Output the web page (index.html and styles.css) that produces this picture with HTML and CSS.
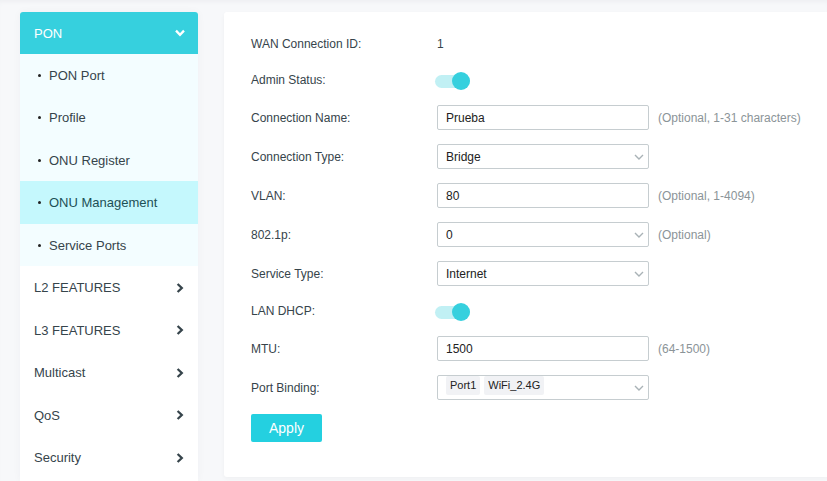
FILE: index.html
```
<!DOCTYPE html>
<html lang="en">

<head>
    <meta charset="UTF-8">
    <meta name="viewport" content="width=device-width, initial-scale=1.0">
    <title>ONU Management</title>
    <link rel="stylesheet" href="styles.css">
</head>

<body>
    <svg class="sprite" aria-hidden="true">
        <symbol id="chevron" viewBox="0 0 12 12">
            <path d="M3.6 2 7.8 6 3.6 10" />
        </symbol>
    </svg>

    <nav class="sidebar">
        <ul class="menu">
            <li>
                <a class="menu-link open" href="#pon">PON
                    <svg class="arrow"><use href="#chevron" /></svg>
                </a>
                <ul class="submenu">
                    <li><a href="#port">PON Port</a></li>
                    <li><a href="#profile">Profile</a></li>
                    <li><a href="#register">ONU Register</a></li>
                    <li><a class="active" href="#management">ONU Management</a></li>
                    <li><a href="#service">Service Ports</a></li>
                </ul>
            </li>
            <li><a class="menu-link" href="#l2">L2 FEATURES <svg class="arrow"><use href="#chevron" /></svg></a></li>
            <li><a class="menu-link" href="#l3">L3 FEATURES <svg class="arrow"><use href="#chevron" /></svg></a></li>
            <li><a class="menu-link" href="#multicast">Multicast <svg class="arrow"><use href="#chevron" /></svg></a></li>
            <li><a class="menu-link" href="#qos">QoS <svg class="arrow"><use href="#chevron" /></svg></a></li>
            <li><a class="menu-link" href="#security">Security <svg class="arrow"><use href="#chevron" /></svg></a></li>
        </ul>
    </nav>

    <main class="content">
        <form class="panel">
            <div class="row id-row">
                <span class="label">WAN Connection ID:</span>
                <span>1</span>
            </div>
            <div class="row switch-row">
                <label class="label" for="adminStatus">Admin Status:</label>
                <input class="switch" type="checkbox" id="adminStatus" checked>
            </div>
            <div class="row">
                <label class="label" for="connectionName">Connection Name:</label>
                <input class="field" type="text" id="connectionName" value="Prueba">
                <span class="hint">(Optional, 1-31 characters)</span>
            </div>
            <div class="row">
                <label class="label" for="connectionType">Connection Type:</label>
                <div class="select-box">
                    <select class="field" id="connectionType">
                        <option>Bridge</option>
                    </select>
                    <svg class="caret" viewBox="0 0 10 6"><path d="M1 1l4 4 4-4" /></svg>
                </div>
            </div>
            <div class="row">
                <label class="label" for="vlan">VLAN:</label>
                <input class="field" type="text" id="vlan" value="80">
                <span class="hint">(Optional, 1-4094)</span>
            </div>
            <div class="row">
                <label class="label" for="priority">802.1p:</label>
                <div class="select-box">
                    <select class="field" id="priority">
                        <option>0</option>
                    </select>
                    <svg class="caret" viewBox="0 0 10 6"><path d="M1 1l4 4 4-4" /></svg>
                </div>
                <span class="hint">(Optional)</span>
            </div>
            <div class="row">
                <label class="label" for="serviceType">Service Type:</label>
                <div class="select-box">
                    <select class="field" id="serviceType">
                        <option>Internet</option>
                    </select>
                    <svg class="caret" viewBox="0 0 10 6"><path d="M1 1l4 4 4-4" /></svg>
                </div>
            </div>
            <div class="row switch-row">
                <label class="label" for="lanDhcp">LAN DHCP:</label>
                <input class="switch" type="checkbox" id="lanDhcp" checked>
            </div>
            <div class="row">
                <label class="label" for="mtu">MTU:</label>
                <input class="field" type="text" id="mtu" value="1500">
                <span class="hint">(64-1500)</span>
            </div>
            <div class="row">
                <label class="label" for="portBinding">Port Binding:</label>
                <div class="select-box">
                    <button class="field tags" type="button" id="portBinding" aria-haspopup="listbox">
                        <span class="tag">Port1</span>
                        <span class="tag">WiFi_2.4G</span>
                    </button>
                    <svg class="caret" viewBox="0 0 10 6"><path d="M1 1l4 4 4-4" /></svg>
                </div>
            </div>
            <button class="apply" type="button">Apply</button>
        </form>
    </main>
</body>

</html>
```

FILE: styles.css
```
* {
    box-sizing: border-box;
}

body {
    display: flex;
    gap: 26px;
    margin: 0;
    min-height: 100vh;
    padding: 12px 0 0 20px;
    font-family: "Liberation Sans", Arial, sans-serif;
    font-size: 12px;
    color: #36444b;
    background-color: #f7f8fa;
    box-shadow: inset 0 4px 4px -2px #eeeff2;
}

.sprite {
    position: absolute;
    width: 0;
    height: 0;
}

.sidebar {
    flex: 0 0 178px;
    background-color: #fff;
    border-radius: 3px 3px 0 0;
    box-shadow: 0 0 8px rgba(40, 60, 80, 0.04);
}

.menu,
.submenu {
    margin: 0;
    padding: 0;
    list-style: none;
    font-size: 13px;
}

.menu a {
    display: flex;
    align-items: center;
    height: 42px;
    color: #36444b;
    text-decoration: none;
}

.menu li:nth-child(even) > a {
    height: 43px;
}

.menu .menu-link {
    justify-content: space-between;
    padding: 0 12px 0 14px;
}

.menu .open {
    color: #fff;
    background-color: #36d0de;
    border-radius: 3px 3px 0 0;
}

.arrow {
    width: 12px;
    height: 12px;
    fill: none;
    stroke: currentColor;
    stroke-width: 2.3;
}

.open .arrow {
    transform: rotate(90deg);
}

.submenu {
    background-color: #f3fdff;
}

.menu .submenu a {
    gap: 8px;
    padding-left: 18px;
}

.submenu a::before {
    content: "";
    width: 3px;
    height: 3px;
    border-radius: 50%;
    background-color: #222;
}

.menu .submenu .active {
    color: #1d5056;
    background-color: #c5f8fd;
}

.content {
    flex: 1;
}

.panel {
    display: flex;
    flex-direction: column;
    align-items: flex-start;
    gap: 14px;
    padding: 20px 0 35px 27px;
    background-color: #fff;
    border-radius: 3px 0 0 3px;
    box-shadow: 0 2px 4px rgba(40, 50, 60, 0.04);
}

.row {
    display: flex;
    align-items: center;
    height: 25px;
}

.id-row {
    height: 23px;
}

.switch-row {
    height: 22px;
}

.label {
    width: 186px;
}

.field {
    width: 212px;
    height: 25px;
    margin: 0;
    padding: 0 8px;
    font-family: inherit;
    font-size: 12px;
    color: #222;
    background-color: #fff;
    border: 1px solid #c6cdd0;
    border-radius: 2px;
    appearance: none;
}

.select-box {
    position: relative;
    display: flex;
}

.caret {
    position: absolute;
    right: 5px;
    top: 10px;
    width: 10px;
    height: 6px;
    fill: none;
    stroke: #a9b2b6;
    stroke-width: 1.4;
    pointer-events: none;
}

.tags {
    display: flex;
    align-items: flex-start;
    gap: 4px;
}

.tag {
    height: 19px;
    padding: 0 4px;
    font-size: 11px;
    line-height: 18px;
    background-color: #f1f2f5;
    border-radius: 2px;
}

.hint {
    margin-left: 9px;
    color: #8b9498;
}

.switch {
    display: flex;
    align-items: center;
    justify-content: flex-end;
    width: 35px;
    height: 13px;
    margin: 2px 0 0 -2px;
    background-color: #e2e5e7;
    border-radius: 7px;
    appearance: none;
}

.switch::after {
    content: "";
    flex: none;
    width: 18px;
    height: 18px;
    border-radius: 50%;
    background-color: #fff;
}

.switch:checked {
    background-color: #c1f0f4;
}

.switch:checked::after {
    background-color: #36d0de;
}

.apply {
    width: 71px;
    height: 28px;
    padding: 0;
    font-family: inherit;
    font-size: 14px;
    color: #fff;
    background-color: #24d0e0;
    border: none;
    border-radius: 2px;
}
```
